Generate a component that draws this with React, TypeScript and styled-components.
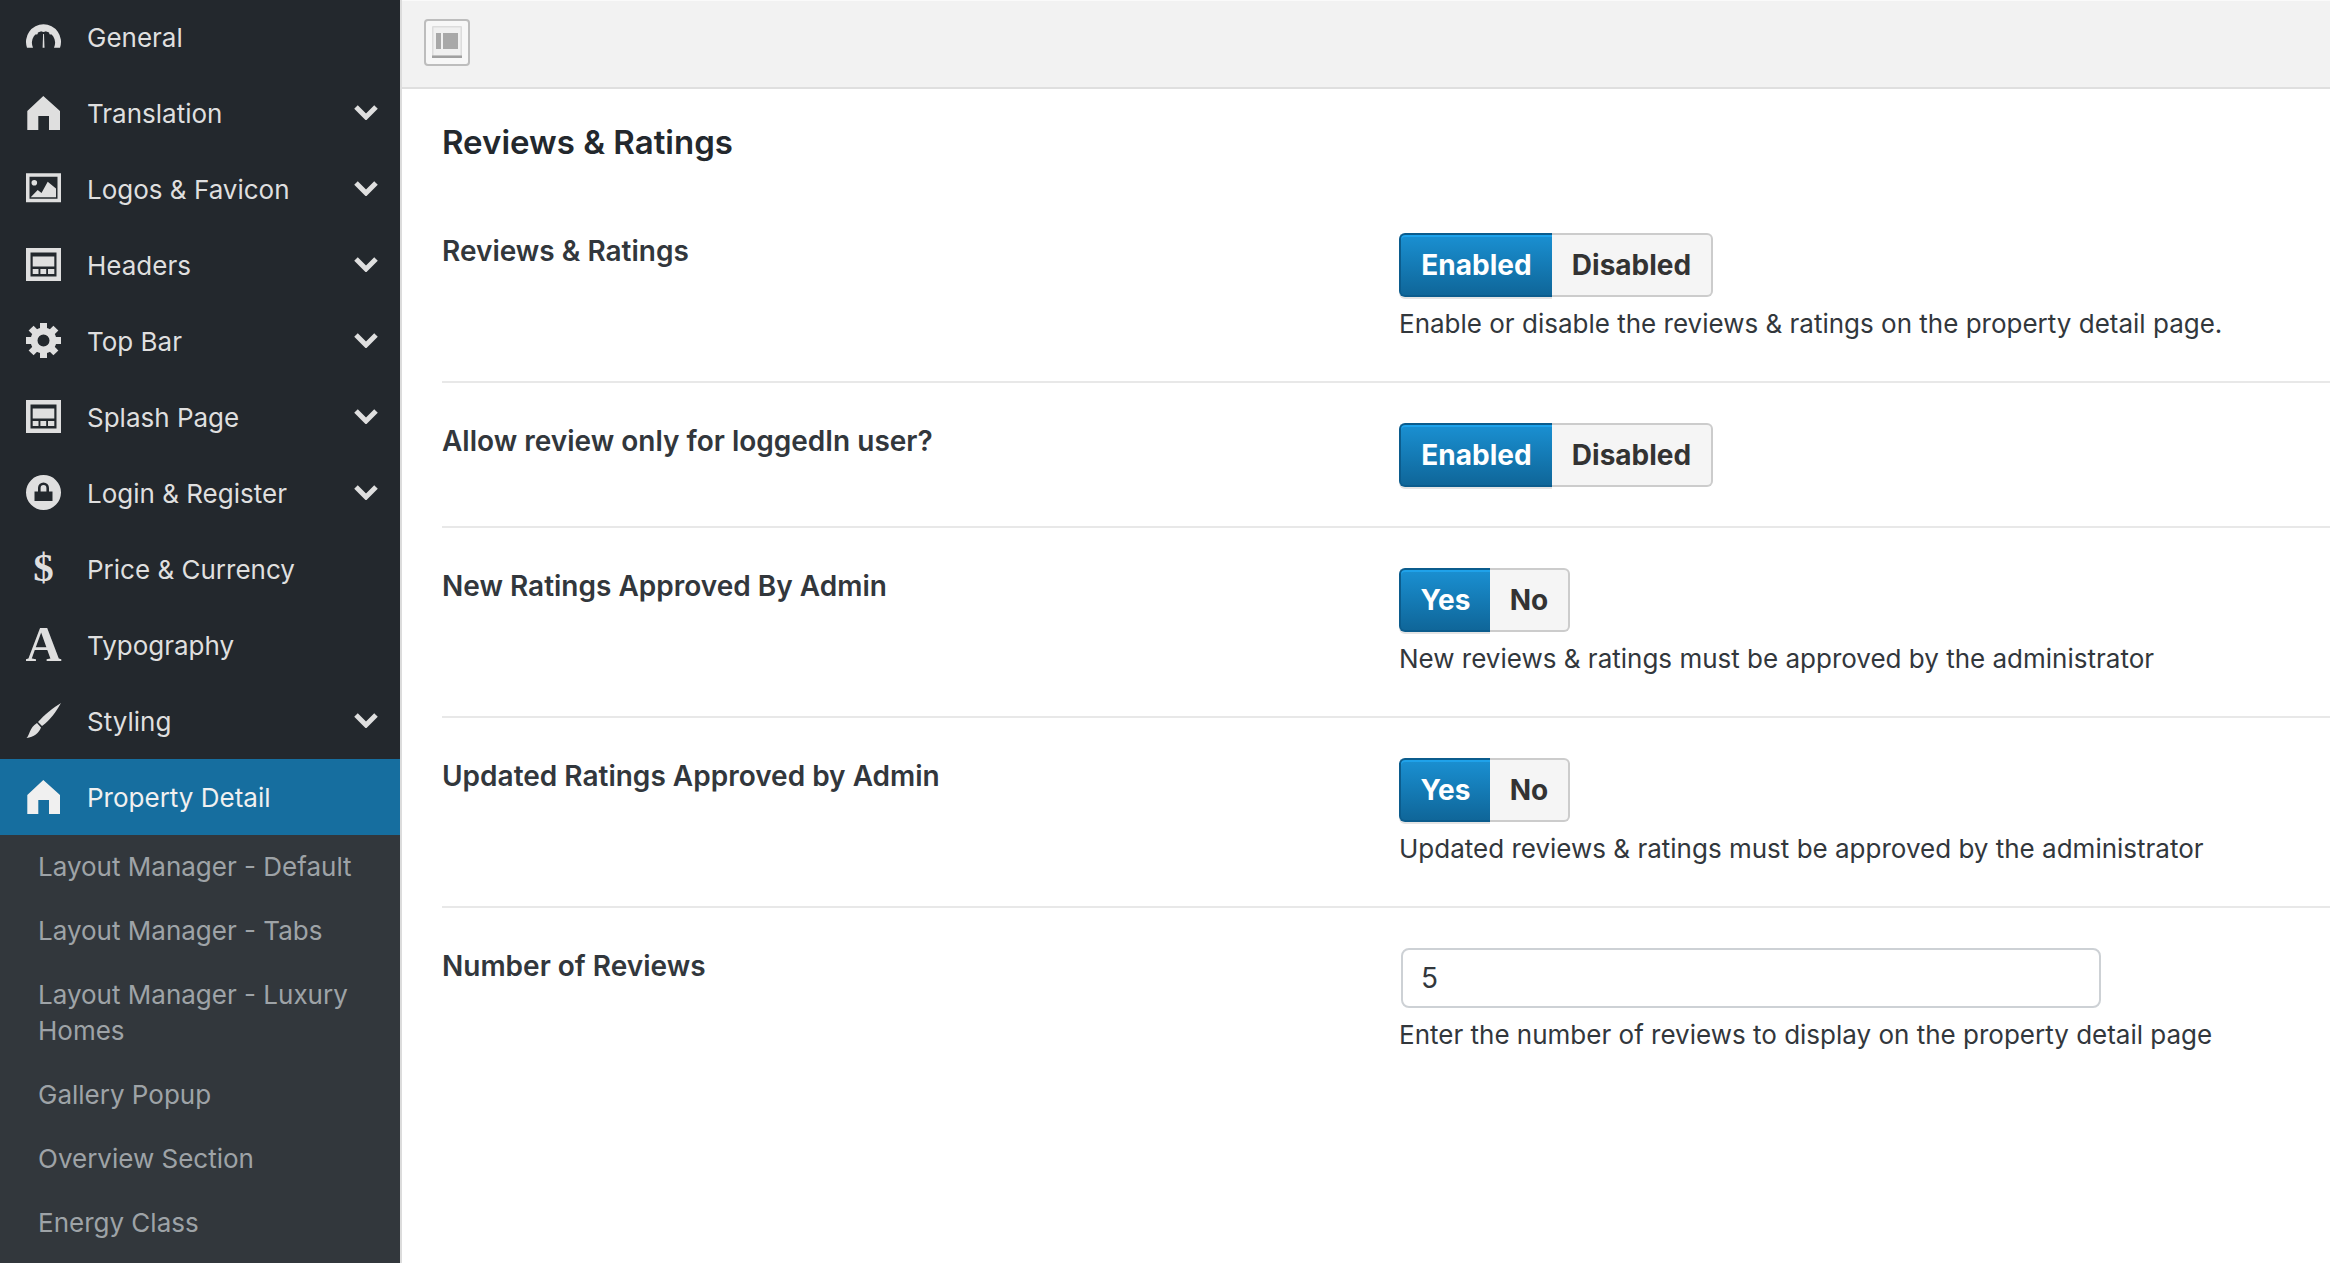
import React from 'react'
import styled, { createGlobalStyle } from 'styled-components'

const GlobalStyle = createGlobalStyle`
  html, body {
    margin: 0;
    padding: 0;
    height: 100%;
    overflow: hidden;
    background: #fff;
    font-family: Inter, "Liberation Sans", sans-serif;
  }
  * { box-sizing: border-box; }
`

const Page = styled.div`
  display: flex;
  width: 2330px;
  height: 1264px;
  overflow: hidden;
`

// sidebar
const Sidebar = styled.nav`
  flex: 0 0 402px;
  height: 1264px;
  overflow: hidden;
  background: #23282d;
  border-right: 2px solid #dcdcdc;
  margin-top: -1px;
`

const MenuRow = styled.div<{ $active?: boolean }>`
  display: flex;
  align-items: center;
  height: 76px;
  padding: 0 22px 0 26px;
  font-size: 26px;
  color: ${p => (p.$active ? '#f0f0f0' : '#dfdfdf')};
  background: ${p => (p.$active ? '#166e9f' : 'transparent')};
`

const MenuIcon = styled.svg`
  flex: 0 0 36px;
  width: 36px;
  height: 36px;
  fill: currentColor;
`

const MenuLabel = styled.span`
  margin-left: 25px;
  flex: 1;
  white-space: nowrap;
`

const Chevron = styled.svg`
  flex: 0 0 24px;
  width: 24px;
  height: 16px;
  margin-top: -3px;
  fill: none;
  stroke: currentColor;
  stroke-width: 5;
`

const SubMenu = styled.div`
  background: #32373c;
  height: 500px;
`

const SubRow = styled.div`
  padding: 14px 40px 14px 38px;
  font-size: 26px;
  line-height: 36px;
  color: #9ea3a7;
`

// main column
const Main = styled.main`
  flex: 1;
  min-width: 0;
  display: flex;
  flex-direction: column;
`

const TopBar = styled.header`
  flex: 0 0 89px;
  display: flex;
  align-items: center;
  padding: 0 0 4px 22px;
  background: #f2f2f2;
  border-top: 1px solid #fafafa;
  border-bottom: 2px solid #dfdfdf;
`

const LayoutButton = styled.button`
  display: flex;
  align-items: center;
  justify-content: center;
  width: 46px;
  height: 47px;
  padding: 0;
  background: #f7f7f7;
  border: 2px solid #bdbdbd;
  border-radius: 4px;
`

const Content = styled.section`
  padding-left: 40px;
`

const Title = styled.h2`
  margin: 0;
  height: 104px;
  padding-top: 30px;
  font-size: 33px;
  line-height: 46px;
  font-weight: 600;
  color: #23282d;
`

const FieldRow = styled.div`
  display: grid;
  grid-template-columns: 957px 1fr;
  padding: 40px 0 39px;
  border-bottom: 2px solid #e8e8e8;

  &:last-child {
    border-bottom: 0;
  }
`

const FieldLabel = styled.div`
  font-size: 28px;
  line-height: 36px;
  font-weight: 600;
  color: #32373c;
`

const Toggle = styled.div`
  display: inline-flex;
  vertical-align: top;
`

const Segment = styled.span<{ $on?: boolean; $width: number }>`
  display: flex;
  align-items: center;
  justify-content: center;
  width: ${p => p.$width}px;
  height: 64px;
  font-size: 28px;
  font-weight: 700;
  color: ${p => (p.$on ? '#fff' : '#333')};
  background: ${p => (p.$on ? 'linear-gradient(#1a90d2, #0f6699)' : '#f5f5f5')};
  border: 2px solid ${p => (p.$on ? '#0b5c8d' : '#ccc')};
  border-left-width: ${p => (p.$on ? 2 : 0)}px;
  border-right-width: ${p => (p.$on ? 0 : 2)}px;
  border-radius: ${p => (p.$on ? '6px 0 0 6px' : '0 6px 6px 0')};
  box-shadow: ${p => (p.$on ? 'inset 0 2px 0 #1fa2ea, 0 2px 0 #e4e4e4' : 'none')};
`

const Description = styled.p`
  margin: 9px 0 0;
  font-size: 26px;
  line-height: 36px;
  color: #32373c;
  white-space: nowrap;
`

const NumberInput = styled.input`
  display: block;
  width: 700px;
  height: 60px;
  margin-left: 2px;
  padding: 0 18px;
  font-family: inherit;
  font-size: 28px;
  color: #32373c;
  background: #fff;
  border: 2px solid #cdd1d5;
  border-radius: 8px;
`

const ChevronIcon = () => (
  <Chevron viewBox="0 0 24 16">
    <path d="M2 3 L12 13 L22 3" />
  </Chevron>
)

const HomeIcon = () => (
  <MenuIcon viewBox="0 0 36 36">
    <path d="M17.3 1 L34 16 L34 35 L23 35 L23 21 L12.3 21 L12.3 35 L1.3 35 L1.3 16 Z" />
  </MenuIcon>
)

const LayoutIcon = () => (
  <MenuIcon viewBox="0 0 36 36">
    <path
      fillRule="evenodd"
      d="M0 1 H35 V34 H0 Z M4.5 5.5 V29.5 H30.5 V5.5 Z M6.7 9.5 H28.3 V19.5 H6.7 Z M6.7 22 H12.5 V27 H6.7 Z M14.4 22 H20.2 V27 H14.4 Z M22 22 H28.3 V27 H22 Z"
    />
  </MenuIcon>
)

const gearTeeth = [0, 45, 90, 135, 180, 225, 270, 315]

const icons: Record<string, React.ReactNode> = {
  general: (
    <MenuIcon viewBox="0 0 36 36">
      <path d="M1 28.7 A17.5 17.5 0 1 1 34 28.7 H28 A11.6 11.6 0 1 0 7 28.7 Z" />
      <path d="M16.6 28.7 L17.1 15 H18 L18.5 28.7 Z" />
      <circle cx="17.5" cy="11.5" r="1.6" />
      <circle cx="10.3" cy="14" r="1.6" />
      <circle cx="24.7" cy="14" r="1.6" />
    </MenuIcon>
  ),
  home: <HomeIcon />,
  image: (
    <MenuIcon viewBox="0 0 36 36">
      <path
        fillRule="evenodd"
        d="M0 2.3 H35 V31.3 H0 Z M3.5 5.8 V27.8 H31.5 V5.8 Z"
      />
      <circle cx="8.3" cy="11.7" r="2.8" />
      <path d="M4.7 26.3 L11.7 19 L15.5 22 L21.7 10.7 L30 17.5 V26.3 Z" />
    </MenuIcon>
  ),
  layout: <LayoutIcon />,
  gear: (
    <MenuIcon viewBox="0 0 36 36">
      <circle cx="17.5" cy="17.5" r="9.5" fill="none" stroke="currentColor" strokeWidth="7" />
      {gearTeeth.map(a => (
        <rect key={a} x="14" y="0" width="7" height="6" transform={`rotate(${a} 17.5 17.5)`} />
      ))}
    </MenuIcon>
  ),
  lock: (
    <MenuIcon viewBox="0 0 36 36">
      <path
        fillRule="evenodd"
        d="M17.5 0 A17.5 17.5 0 1 1 17.5 35 A17.5 17.5 0 1 1 17.5 0 Z M8.5 16.5 V26 H26.5 V16.5 H23 V13 A5.5 5.5 0 0 0 12 13 V16.5 Z M14.6 16.5 V13 A2.9 2.9 0 0 1 20.4 13 V16.5 Z"
      />
    </MenuIcon>
  ),
  dollar: (
    <MenuIcon viewBox="0 0 36 36">
      <text x="17.5" y="30" textAnchor="middle" fontFamily="Liberation Serif, serif" fontWeight="700" fontSize="41">
        $
      </text>
    </MenuIcon>
  ),
  font: (
    <MenuIcon viewBox="0 0 36 36">
      <text x="17.5" y="34" textAnchor="middle" fontFamily="Liberation Serif, serif" fontWeight="700" fontSize="50">
        A
      </text>
    </MenuIcon>
  ),
  brush: (
    <MenuIcon viewBox="0 0 36 36">
      <path d="M35 0 C30 9 24 17 16 23 L12 19 C18 12 27 5 35 0 Z" />
      <path d="M11 20 L15 24.5 C13 30 8 34 0.5 35 C4 32 3 25 11 20 Z" />
    </MenuIcon>
  ),
}

const menu = [
  { label: 'General', icon: 'general' },
  { label: 'Translation', icon: 'home', more: true },
  { label: 'Logos & Favicon', icon: 'image', more: true },
  { label: 'Headers', icon: 'layout', more: true },
  { label: 'Top Bar', icon: 'gear', more: true },
  { label: 'Splash Page', icon: 'layout', more: true },
  { label: 'Login & Register', icon: 'lock', more: true },
  { label: 'Price & Currency', icon: 'dollar' },
  { label: 'Typography', icon: 'font' },
  { label: 'Styling', icon: 'brush', more: true },
  { label: 'Property Detail', icon: 'home', active: true },
]

const subMenu = [
  'Layout Manager - Default',
  'Layout Manager - Tabs',
  'Layout Manager - Luxury Homes',
  'Gallery Popup',
  'Overview Section',
  'Energy Class',
]

const enabledOptions = [
  { text: 'Enabled', width: 153, on: true },
  { text: 'Disabled', width: 161 },
]

const yesOptions = [
  { text: 'Yes', width: 91, on: true },
  { text: 'No', width: 80 },
]

const fields = [
  {
    label: 'Reviews & Ratings',
    options: enabledOptions,
    help: 'Enable or disable the reviews & ratings on the property detail page.',
  },
  { label: 'Allow review only for loggedIn user?', options: enabledOptions },
  {
    label: 'New Ratings Approved By Admin',
    options: yesOptions,
    help: 'New reviews & ratings must be approved by the administrator',
  },
  {
    label: 'Updated Ratings Approved by Admin',
    options: yesOptions,
    help: 'Updated reviews & ratings must be approved by the administrator',
  },
]

const App = () => {
  return (
    <Page>
      <GlobalStyle />
      <Sidebar>
        {menu.map(item => (
          <MenuRow key={item.label} $active={item.active}>
            {icons[item.icon]}
            <MenuLabel>{item.label}</MenuLabel>
            {item.more && <ChevronIcon />}
          </MenuRow>
        ))}
        <SubMenu>
          {subMenu.map(name => (
            <SubRow key={name}>{name}</SubRow>
          ))}
        </SubMenu>
      </Sidebar>
      <Main>
        <TopBar>
          <LayoutButton aria-label="Layout">
            <svg width="30" height="32" viewBox="0 0 30 32">
              <rect x="0" y="0" width="30" height="32" rx="1" fill="#dcdcdc" />
              <rect x="1.5" y="1.5" width="27" height="28" fill="#f0f0f0" />
              <rect x="4" y="7" width="5" height="16" fill="#a8a8a8" />
              <rect x="11" y="7" width="15" height="16" fill="#a8a8a8" />
              <rect x="0" y="29.5" width="30" height="2.5" fill="#a0a0a0" />
            </svg>
          </LayoutButton>
        </TopBar>
        <Content>
          <Title>Reviews &amp; Ratings</Title>
          {fields.map(field => (
            <FieldRow key={field.label}>
              <FieldLabel>{field.label}</FieldLabel>
              <div>
                <Toggle>
                  {field.options.map(opt => (
                    <Segment key={opt.text} $on={opt.on} $width={opt.width}>
                      {opt.text}
                    </Segment>
                  ))}
                </Toggle>
                {field.help && <Description>{field.help}</Description>}
              </div>
            </FieldRow>
          ))}
          <FieldRow>
            <FieldLabel>Number of Reviews</FieldLabel>
            <div>
              <NumberInput defaultValue="5" />
              <Description>Enter the number of reviews to display on the property detail page</Description>
            </div>
          </FieldRow>
        </Content>
      </Main>
    </Page>
  )
}

export default App
